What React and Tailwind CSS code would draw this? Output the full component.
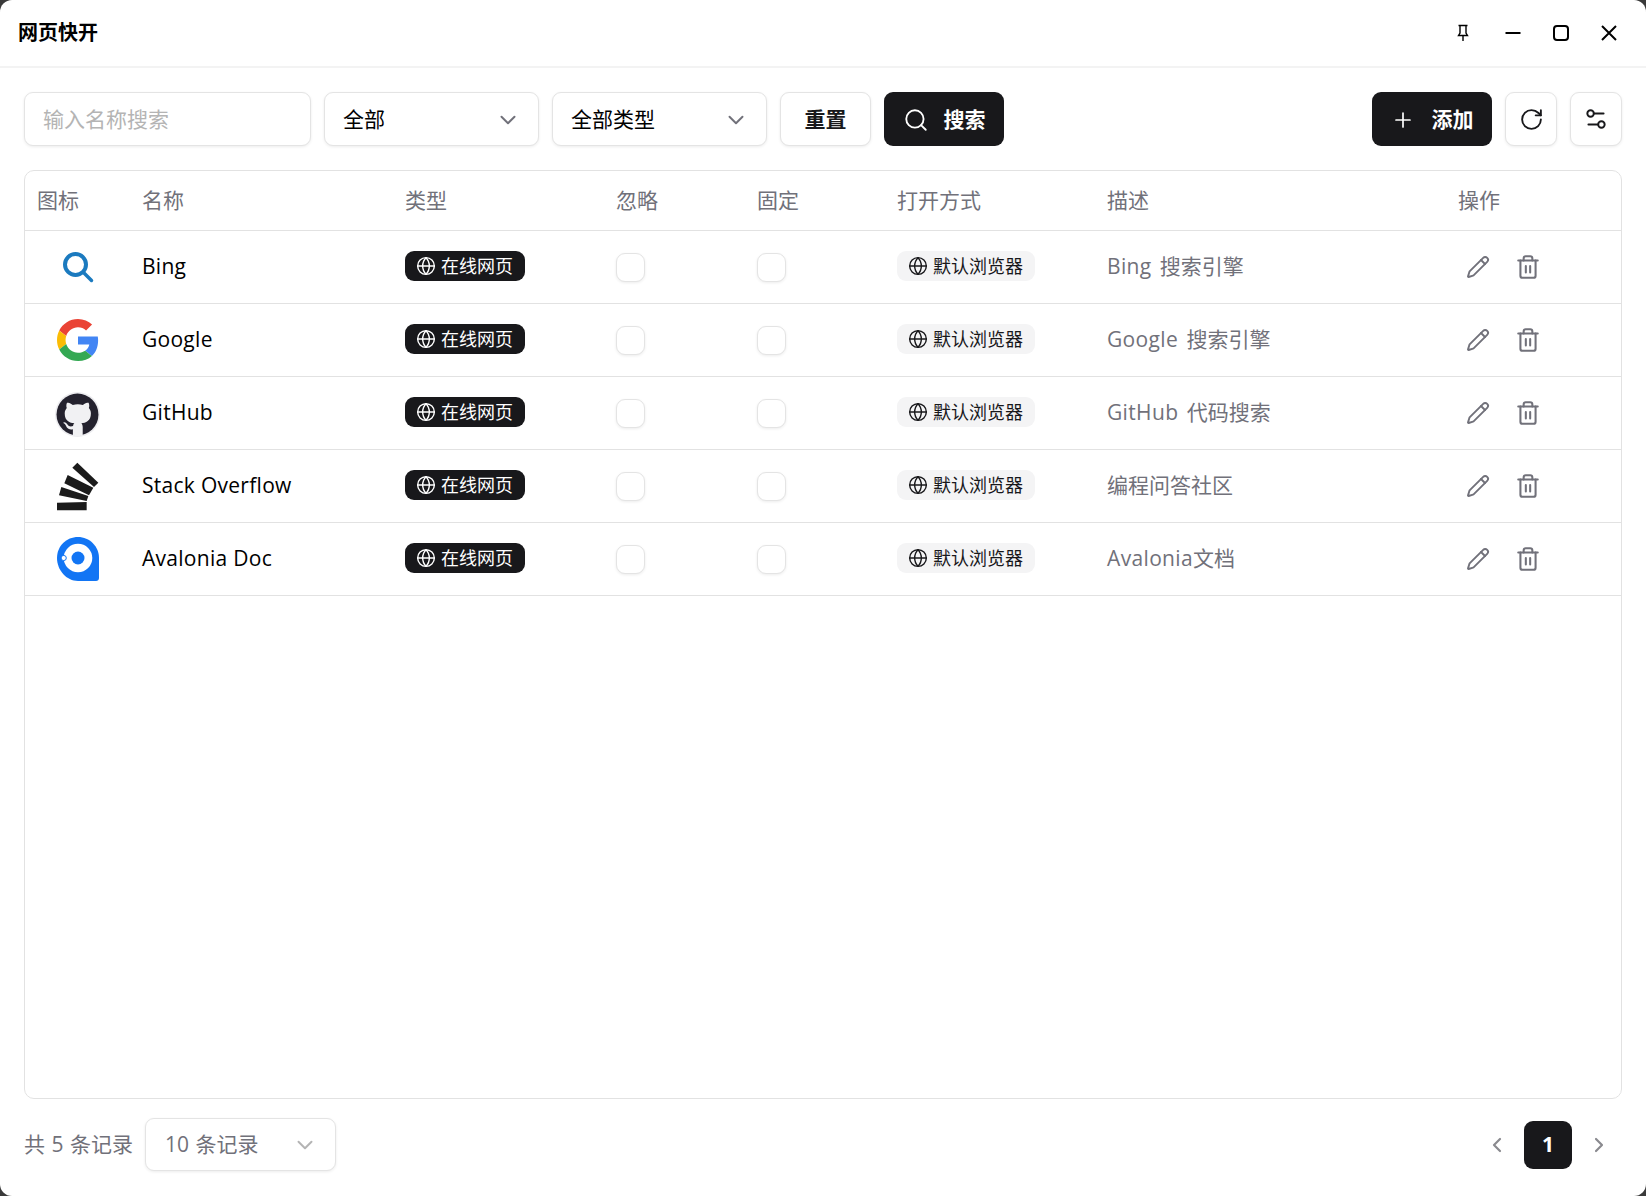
import { ChevronDown, ChevronLeft, ChevronRight, Globe, Pencil, Plus, RotateCw, Search, Settings2, Trash2 } from 'lucide-react';

const rows = [
  { name: 'Bing', latin: 'Bing ', desc: '搜索引擎', icon: <BingIcon /> },
  { name: 'Google', latin: 'Google ', desc: '搜索引擎', icon: <GoogleIcon /> },
  { name: 'GitHub', latin: 'GitHub ', desc: '代码搜索', icon: <GithubIcon /> },
  { name: 'Stack Overflow', latin: '', desc: '编程问答社区', icon: <StackIcon /> },
  { name: 'Avalonia Doc', latin: 'Avalonia', desc: '文档', icon: <AvaloniaIcon /> },
];

const cols = 'grid grid-cols-[105px_263px_211px_141px_140px_210px_351px_1fr]';
const box = 'rounded-[9px] border border-[#e4e4e4] bg-white shadow-[0_1px_3px_rgba(0,0,0,0.08)]';

function BingIcon() {
  return (
    <svg width="42" height="42" viewBox="0 0 42 42" fill="none" stroke="#1b7abf" strokeLinecap="round">
      <circle cx="18.5" cy="18.500" r="10.500" strokeWidth="4" />
      <path d="M27 27L34.500 34.500" strokeWidth="3.500" />
    </svg>
  );
}

function GoogleIcon() {
  return (
    <svg width="42" height="42" viewBox="0 0 48 48">
      <path fill="#EA4335" d="M24 9.5c3.54 0 6.71 1.22 9.21 3.6l6.85-6.85C35.9 2.38 30.47 0 24 0 14.62 0 6.51 5.38 2.56 13.22l7.98 6.19C12.43 13.72 17.74 9.5 24 9.5z" />
      <path fill="#4285F4" d="M46.98 24.55c0-1.57-.15-3.09-.38-4.55H24v9.02h12.94c-.58 2.96-2.26 5.48-4.78 7.18l7.73 6c4.51-4.18 7.09-10.36 7.09-17.65z" />
      <path fill="#FBBC05" d="M10.53 28.59c-.48-1.45-.76-2.99-.76-4.59s.27-3.14.76-4.59l-7.98-6.19C.92 16.46 0 20.12 0 24c0 3.88.92 7.54 2.56 10.78l7.97-6.19z" />
      <path fill="#34A853" d="M24 48c6.48 0 11.93-2.13 15.89-5.81l-7.73-6c-2.15 1.45-4.92 2.3-8.16 2.3-6.26 0-11.57-4.22-13.47-9.91l-7.98 6.19C6.51 42.62 14.62 48 24 48z" />
    </svg>
  );
}

function GithubIcon() {
  return (
    <svg width="45" height="45" viewBox="0 0 44 44" className="mt-[2px]">
      <circle cx="22" cy="22" r="22" fill="#ececef" />
      <circle cx="22" cy="22" r="20.5" fill="#24222e" />
      <path
        fill="#f1f1f3"
        d="M17.5 42v-5.600c-4.700 1-6.200-2-6.600-3.100-.3-.7-1-2-1.900-2.500-.7-.3-1.600-1.200 0-1.200 1.500 0 2.600 1.400 3 2 1.700 2.900 4.500 2.100 5.600 1.600.2-1.200.7-2.100 1.300-2.600-4.300-.5-9.400-2.200-9.400-9.600 0-2.100.8-3.900 2-5.300-.2-.5-.9-2.500.2-5.100 0 0 1.900-.5 5.700 2 1.600-.4 3.200-.7 4.900-.7s3.300.2 4.900.7c3.800-2.600 5.700-2 5.700-2 1.100 2.700.4 4.600.2 5.100 1.300 1.400 2 3.100 2 5.300 0 7.400-5.100 9.100-9.400 9.600.7.600 1.400 1.800 1.400 3.600V42c0 .5-2 1-5.200 1s-5-.5-5-1z"
      />
    </svg>
  );
}

function StackIcon() {
  return (
    <svg width="45" height="50" viewBox="105 695 135 150" fill="#1b1b1b">
      <polygon points="172,700 235,760 222,773 157,715" />
      <polygon points="143,737 220,775 207,798 133,762" />
      <polygon points="124,773 205,800 200,815 117,798" />
      <polygon points="111,820 200,818 200,843 111,843" />
    </svg>
  );
}

function AvaloniaIcon() {
  return (
    <svg width="42" height="44" viewBox="0 0 42 44">
      <path fill="#1275f4" d="M21 0C32.600 0 42 9.400 42 21v20c0 1.700-1.300 3-3 3H21C9.400 44 0 33 0 21S9.400 0 21 0z" />
      <circle cx="21" cy="21" r="14.300" fill="white" />
      <circle cx="21" cy="21" r="6.500" fill="#1275f4" />
      <circle cx="6.700" cy="21" r="2.600" fill="white" stroke="#1275f4" strokeWidth="1" />
    </svg>
  );
}

// drawn by hand: the window buttons are thinner and smaller than the package icons
function PinIcon() {
  return (
    <svg width="14" height="18" viewBox="0 0 14 18" fill="none" stroke="black" strokeWidth="1.400">
      <path d="M2.500 1.500h9M4 1.500v7.500L2.500 11.500h9L10 9V1.500M7 11.500V17" />
    </svg>
  );
}

function MinIcon() {
  return (
    <svg width="18" height="18" viewBox="0 0 18 18" fill="none" stroke="black" strokeWidth="2">
      <path d="M1.500 9h15" />
    </svg>
  );
}

function MaxIcon() {
  return (
    <svg width="18" height="18" viewBox="0 0 18 18" fill="none" stroke="black" strokeWidth="2">
      <rect x="2" y="2" width="14" height="14" rx="3" />
    </svg>
  );
}

function CloseIcon() {
  return (
    <svg width="18" height="18" viewBox="0 0 18 18" fill="none" stroke="black" strokeWidth="2">
      <path d="M2 2l14 14M16 2L2 16" />
    </svg>
  );
}

function Row({ row }) {
  return (
    <div className={`${cols} h-[73px] items-center border-b border-[#e2e2e2]`}>
      <div className="flex h-full items-center justify-center">{row.icon}</div>
      <div className="px-3 text-[21px] tracking-[0.28px] text-black">{row.name}</div>
      <div className="px-3">
        <span className="mb-[2px] inline-flex h-[30px] items-center gap-[5px] rounded-[9px] bg-[#18181b] pl-[11px] pr-[12px] text-[18px] text-white">
          <Globe size={20} strokeWidth={1.7} />
          在线网页
        </span>
      </div>
      <div className="px-3"><div className={`h-[29px] w-[29px] ${box}`} /></div>
      <div className="px-3"><div className={`h-[29px] w-[29px] ${box}`} /></div>
      <div className="px-3">
        <span className="mb-[2px] inline-flex h-[30px] items-center gap-[5px] rounded-[9px] bg-[#f4f4f5] pl-[11px] pr-[12px] text-[18px] text-[#18181b]">
          <Globe size={20} strokeWidth={1.7} />
          默认浏览器
        </span>
      </div>
      <div className="px-3 text-[21px] text-[#71717a] [word-spacing:2.5px]">
        <span className="tracking-[0.35px]">{row.latin}</span>
        {row.desc}
      </div>
      <div className="flex items-center gap-[25px] pl-[20px] text-[#71717a]">
        <Pencil size={24} strokeWidth={1.9} />
        <Trash2 size={26} strokeWidth={1.9} />
      </div>
    </div>
  );
}

export default function App() {
  return (
    <div className="h-[1196px] w-[1646px] bg-[#3a3a3a] font-['Open_Sans','Noto_Sans_CJK_SC',sans-serif]">
      <div className="flex h-full flex-col overflow-hidden rounded-[12px] bg-white">
        <div className="flex h-[68px] shrink-0 items-center justify-between border-b-2 border-[#f3f3f3] pl-[18px] pr-[13px]">
          <div className="text-[20px] font-bold text-black">网页快开</div>
          <div className="flex items-center">
            <div className="mr-[2px] flex w-[48px] justify-center"><PinIcon /></div>
            <div className="flex w-[48px] justify-center"><MinIcon /></div>
            <div className="flex w-[48px] justify-center"><MaxIcon /></div>
            <div className="flex w-[48px] justify-center"><CloseIcon /></div>
          </div>
        </div>

        <div className="flex min-h-0 flex-1 flex-col px-[24px]">
          <div className="mt-[24px] flex h-[54px] shrink-0 items-stretch justify-between">
            <div className="flex gap-[13px]">
              <div className={`flex w-[287px] items-center px-[18px] pt-[1px] text-[21px] text-[#b4b4b4] ${box}`}>输入名称搜索</div>
              <div className={`flex w-[215px] items-center justify-between pl-[18px] pr-[17px] pt-[1px] text-[21px] text-black ${box}`}>
                全部
                <ChevronDown size={26} strokeWidth={1.8} className="text-[#71717a]" />
              </div>
              <div className={`flex w-[215px] items-center justify-between pl-[18px] pr-[17px] pt-[1px] text-[21px] text-black ${box}`}>
                全部类型
                <ChevronDown size={26} strokeWidth={1.8} className="text-[#71717a]" />
              </div>
              <div className={`flex w-[91px] items-center justify-center pt-[1px] text-[21px] font-bold text-[#18181b] ${box}`}>重置</div>
              <div className="flex w-[120px] items-center justify-center gap-[15px] rounded-[9px] bg-[#18181b] pt-[1px] text-[21px] font-bold text-white">
                <Search size={26} strokeWidth={1.7} />
                搜索
              </div>
            </div>
            <div className="flex gap-[13px]">
              <div className="flex w-[120px] items-center justify-center gap-[17px] rounded-[9px] bg-[#18181b] pt-[1px] text-[21px] font-bold text-white">
                <Plus size={24} strokeWidth={1.7} />
                添加
              </div>
              <div className={`flex w-[52px] items-center justify-center text-[#18181b] ${box}`}><RotateCw size={25} strokeWidth={1.8} /></div>
              <div className={`flex w-[52px] items-center justify-center text-[#18181b] ${box}`}><Settings2 size={26} strokeWidth={1.8} /></div>
            </div>
          </div>

          <div className="mt-[24px] min-h-0 flex-1 rounded-[10px] border border-[#e2e2e2] bg-white">
            <div className={`${cols} h-[60px] items-center border-b border-[#e2e2e2]`}>
              {['图标', '名称', '类型', '忽略', '固定', '打开方式', '描述', '操作'].map((h) => (
                <div key={h} className="px-3 pt-[1px] text-[21px] text-[#71717a]">{h}</div>
              ))}
            </div>
            {rows.map((r) => (
              <Row key={r.name} row={r} />
            ))}
          </div>

          <div className="mb-[25px] mt-[19px] flex h-[53px] shrink-0 items-center justify-between">
            <div className="flex items-center gap-[12px] text-[21px] text-[#71717a] [word-spacing:1px]">
              共 5 条记录
              <div className={`flex h-[53px] w-[191px] items-center justify-between pl-[19px] pr-[17px] ${box}`}>
                10 条记录
                <ChevronDown size={26} strokeWidth={1.8} className="text-[#b4b4b4]" />
              </div>
            </div>
            <div className="flex items-center gap-[15px] pr-[11px] text-[#8a8a8f]">
              <ChevronLeft size={24} strokeWidth={2.2} />
              <div className="flex h-[48px] w-[48px] items-center justify-center rounded-[9px] bg-[#18181b] text-[21px] font-bold text-white">1</div>
              <ChevronRight size={24} strokeWidth={2.2} />
            </div>
          </div>
        </div>
      </div>
    </div>
  );
}
